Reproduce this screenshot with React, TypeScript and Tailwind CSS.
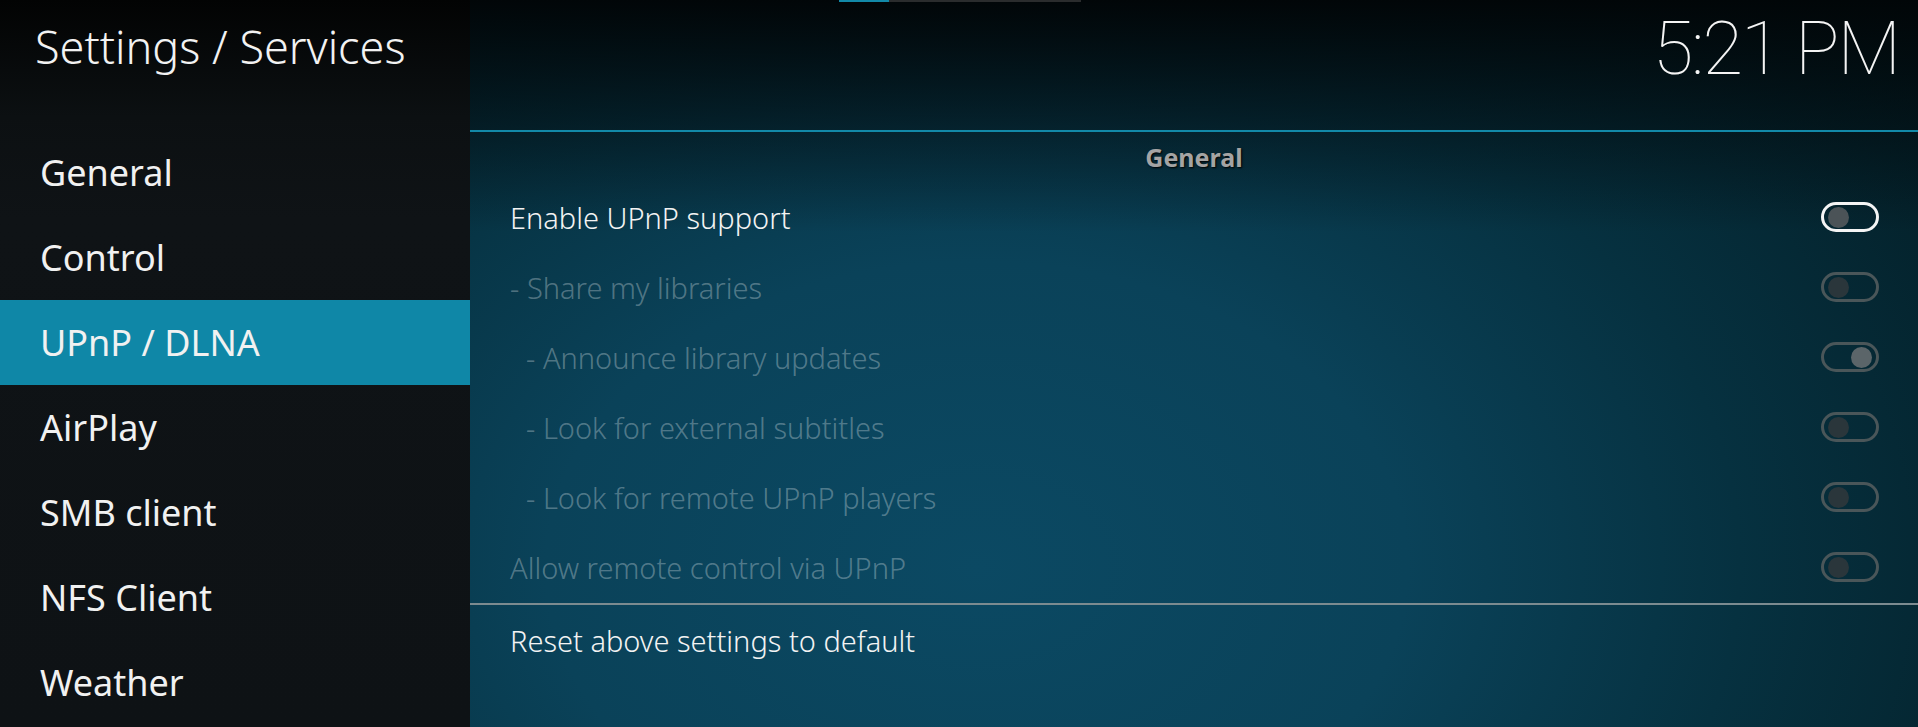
const MENU = ["General", "Control", "UPnP / DLNA", "AirPlay", "SMB client", "NFS Client", "Weather"];

const SETTINGS = [
  { label: "Enable UPnP support", indent: 0, on: false, enabled: true, focused: true },
  { label: "- Share my libraries", indent: 0, on: false, enabled: false },
  { label: "- Announce library updates", indent: 1, on: true, enabled: false },
  { label: "- Look for external subtitles", indent: 1, on: false, enabled: false },
  { label: "- Look for remote UPnP players", indent: 1, on: false, enabled: false },
  { label: "Allow remote control via UPnP", indent: 0, on: false, enabled: false },
];

function Toggle({ on, focused }: { on: boolean; focused?: boolean }) {
  return (
    <div
      className={
        "flex h-[30px] w-[58px] items-center rounded-full border-[3px] px-[4px] " +
        (focused ? "border-[#f4f4f4]" : "border-[#4a5659]") +
        (on ? " justify-end" : " justify-start")
      }
    >
      <div
        className={
          "h-[21px] w-[21px] rounded-full " +
          (focused ? "bg-[#4b5357]" : on ? "bg-[#5b6569]" : "bg-[#2a363b]")
        }
      />
    </div>
  );
}

export default function App() {
  return (
    <div className="flex h-[727px] w-[1918px] overflow-hidden font-['Noto_Sans','Open_Sans',sans-serif]">
      {/* sidebar */}
      <aside className="flex w-[470px] shrink-0 flex-col bg-[#0f1316] bg-[linear-gradient(to_bottom,#020303_0%,#0c1012_16%,#0f1316_30%,#0e1215_100%)]">
        <div className="h-[130px] pl-[35px] pt-[24px]">
          <h1 className="text-[45px] font-light leading-none text-[#f2f2f2]">Settings / Services</h1>
        </div>
        {MENU.map((item) => (
          <div
            key={item}
            className={
              "flex h-[85px] items-center pl-[40px] text-[36px] leading-none text-[#f1f1f1] " +
              (item === "UPnP / DLNA" ? "bg-[#0f87a7]" : "")
            }
          >
            {item}
          </div>
        ))}
      </aside>

      {/* main */}
      <main className="relative flex flex-1 flex-col bg-[#093e53] bg-[image:linear-gradient(to_bottom,#010608_0%,rgba(1,6,8,0.75)_8%,rgba(1,6,8,0)_32%),radial-gradient(ellipse_85%_120%_at_35%_78%,#0b4963_0%,#0a4259_35%,#063140_62%,#031b22_100%)]">
        <div className="absolute left-[369px] top-0 flex h-[2px] w-[242px] bg-[#2a2c2d]">
          <div className="h-full w-[50px] bg-[#1289a8]" />
        </div>

        <header className="flex h-[130px] justify-end pr-[19px] pt-[12px]">
          <span className="font-['Roboto',sans-serif] text-[74px] font-thin leading-none tracking-[-2px] text-[#f4f4f4]">
            5:21 PM
          </span>
        </header>
        <div className="h-[2px] bg-[#1289a8]" />

        <div className="flex h-[50px] items-center justify-center text-[25px] font-bold leading-none text-[#a4a4a4] [text-shadow:1px_1px_2px_#000]">
          General
        </div>

        {SETTINGS.map((s) => (
          <div key={s.label} className="flex h-[70px] items-center justify-between pl-[40px] pr-[39px]">
            <span
              className={
                "text-[29px] font-light leading-none " +
                (s.indent ? "pl-[16px] " : "") +
                (s.enabled ? "text-[#f3f3f3]" : "text-white/30")
              }
            >
              {s.label}
            </span>
            <Toggle on={s.on} focused={s.focused} />
          </div>
        ))}

        <div className="mt-[1px] h-[2px] bg-[#7c8b90]" />
        <div className="flex h-[70px] items-center pl-[40px]">
          <span className="text-[29px] font-light leading-none text-[#f3f3f3]">Reset above settings to default</span>
        </div>
      </main>
    </div>
  );
}
